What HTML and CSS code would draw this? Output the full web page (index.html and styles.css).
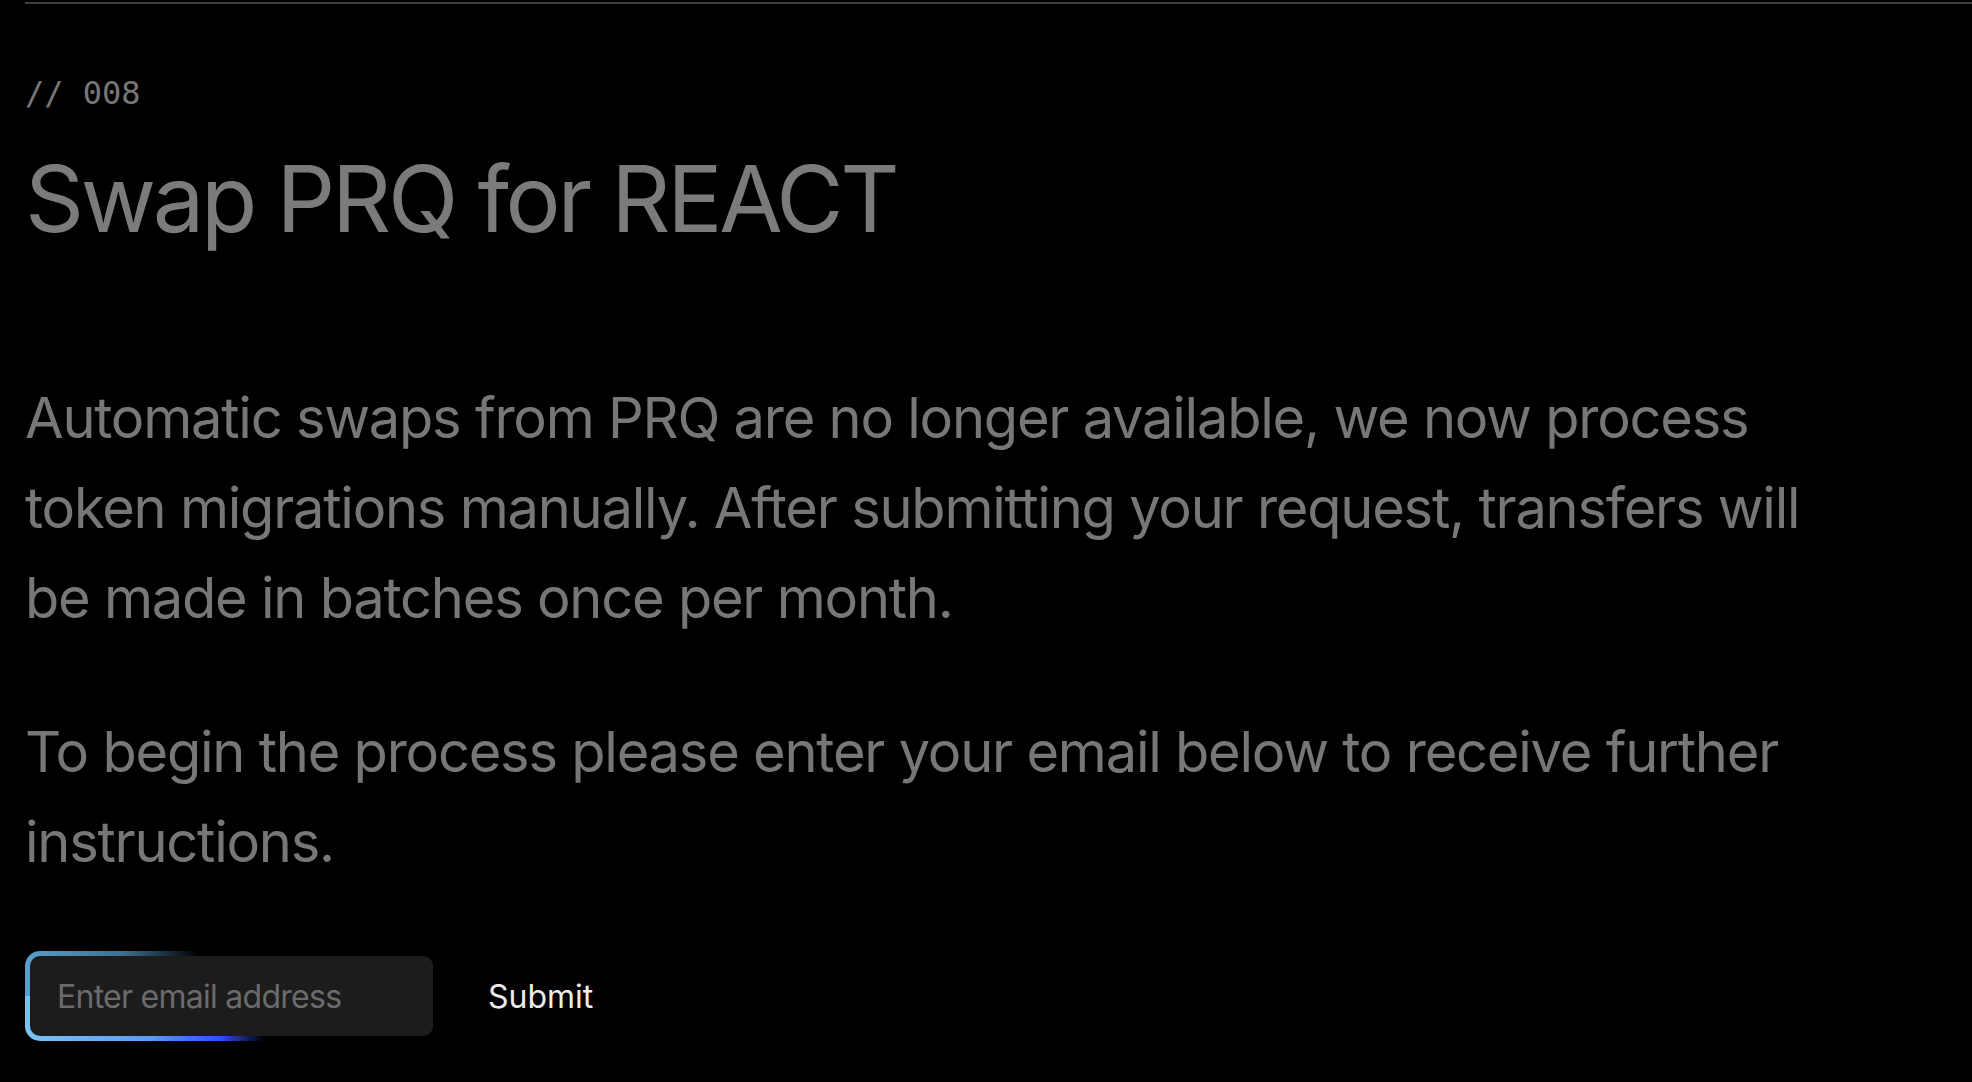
FILE: index.html
```html
<!DOCTYPE html>
<html lang="en">
<head>
  <meta charset="UTF-8" />
  <meta name="viewport" content="width=device-width, initial-scale=1.0"/>
  <title>Swap PRQ for REACT</title>
  <link rel="stylesheet" href="styles.css">
</head>
<body>
  <main class="page">
    <section class="swap">
      <p class="swap-index">// 008</p>
      <h1 class="swap-title">Swap PRQ for REACT</h1>

      <p class="swap-text">Automatic swaps from PRQ are no longer available, we now process token migrations manually. After submitting your request, transfers will be made in batches once per month.</p>
      <p class="swap-text">To begin the process please enter your email below to receive further instructions.</p>

      <form class="swap-form" onsubmit="return false;">
        <div class="email-field">
          <input class="email-input" type="email" placeholder="Enter email address" aria-label="Email address">
        </div>
        <button class="submit-btn" type="submit">Submit</button>
      </form>
    </section>
  </main>
</body>
</html>
```

FILE: styles.css
```css
* {
  margin: 0;
  padding: 0;
  box-sizing: border-box;
}
html, body {
  height: 100%;
  background: #000;
  overflow: hidden;
}
body {
  font-family: 'Inter', 'Liberation Sans', sans-serif;
  color: #7a7a7a;
}

.page {
  margin: 2px 0 0 25px;
  border-top: 2px solid #404040;
}

.swap {
  padding-top: 69px;
  max-width: 1840px;
}

.swap-index {
  font-family: 'DejaVu Sans Mono', monospace;
  font-size: 32px;
  line-height: 40px;
  color: #777;
}

.swap-title {
  margin-top: 35px;
  font-size: 92px;
  line-height: 1.1;
  font-weight: 400;
  letter-spacing: -0.036em;
  color: #7b7b7b;
}

.swap-text {
  font-size: 56px;
  line-height: 90px;
  letter-spacing: -0.022em;
  color: #777;
}
.swap-title + .swap-text {
  margin-top: 124px;
}
.swap-text + .swap-text {
  margin-top: 64px;
}

.swap-form {
  margin-top: 64px;
  display: flex;
  align-items: center;
  gap: 50px;
}

/* anillo con degradado alrededor del input */
.email-field {
  padding: 5px;
  border-radius: 15px;
  background:
    linear-gradient(90deg, #5a9fcb 0%, #3b6f8f 24%, rgba(40, 80, 110, 0) 42%) top left / 100% 50% no-repeat,
    linear-gradient(90deg, #78c4f6 0%, #5b9cf4 30%, #2f50ff 47%, rgba(40, 70, 255, 0) 58%) bottom left / 100% 50% no-repeat;
}

.email-input {
  display: block;
  width: 403px;
  height: 80px;
  padding: 0 27px;
  border: none;
  border-radius: 10px;
  background: #1c1c1c;
  color: #ddd;
  font-family: inherit;
  font-size: 32px;
  letter-spacing: -0.023em;
  outline: none;
}
.email-input::placeholder {
  color: #6b6b6b;
}

.submit-btn {
  background: none;
  border: none;
  padding: 0;
  color: #ececec;
  font-family: inherit;
  font-size: 32px;
  cursor: pointer;
}
```
